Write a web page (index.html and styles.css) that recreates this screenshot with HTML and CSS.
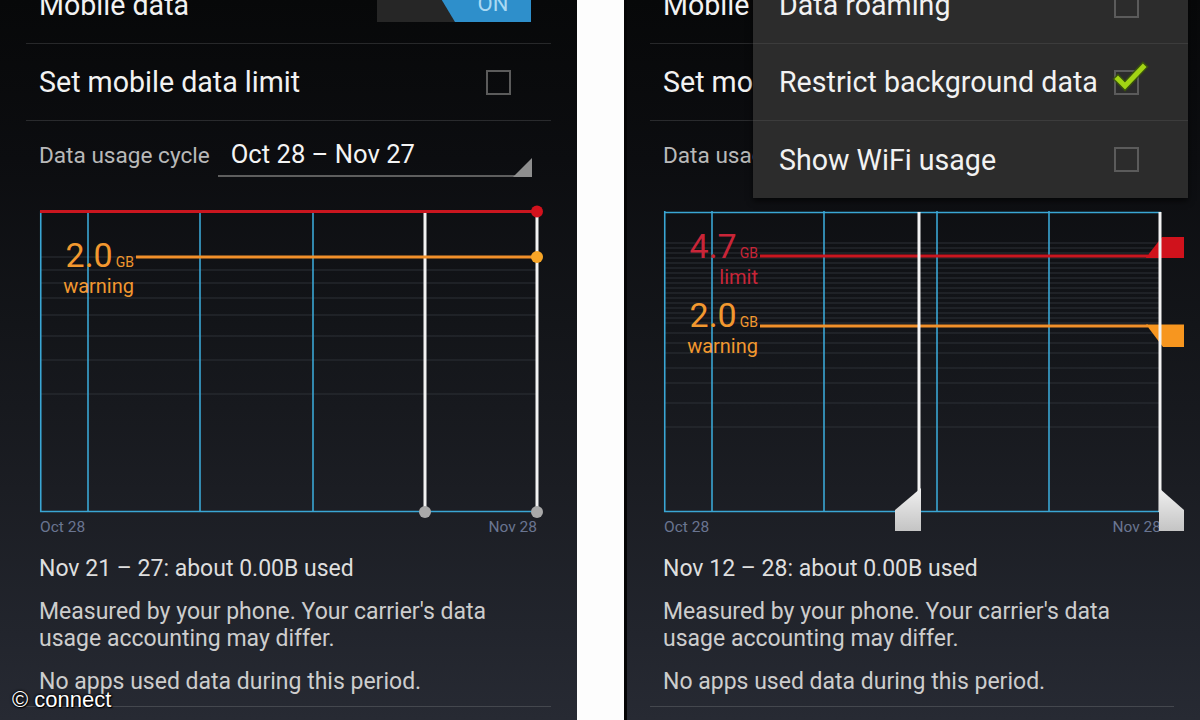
FILE: index.html
```html
<!DOCTYPE html>
<html>
<head>
<meta charset="utf-8">
<title>Data usage</title>
<link rel="stylesheet" href="styles.css">
</head>
<body>
<div class="stage">
  <section class="phone phone-left">
    <div class="row row-first">
      <span class="title">Mobile data</span>
      <div class="toggle"><div class="toggle-on">ON</div></div>
    </div>
    <div class="row">
      <span class="title">Set mobile data limit</span>
      <span class="checkbox"></span>
    </div>
    <div class="cycle">
      <span class="cycle-label">Data usage cycle</span>
      <div class="spinner"><span>Oct 28 – Nov 27</span></div>
    </div>
    <div class="chart">
      <svg class="chart-canvas" width="497" height="301" viewBox="0 0 497 301">
        <g class="grid">
          <line x1="0" x2="497" y1="46" y2="46"/>
          <line x1="0" x2="497" y1="59" y2="59"/>
          <line x1="0" x2="497" y1="72" y2="72"/>
          <line x1="0" x2="497" y1="87" y2="87"/>
          <line x1="0" x2="497" y1="104" y2="104"/>
          <line x1="0" x2="497" y1="125" y2="125"/>
          <line x1="0" x2="497" y1="149" y2="149"/>
          <line x1="0" x2="497" y1="183" y2="183"/>
        </g>
        <g class="cyan">
          <line x1="0.75" x2="0.75" y1="0" y2="301"/>
          <line x1="48" x2="48" y1="0" y2="301"/>
          <line x1="160" x2="160" y1="0" y2="301"/>
          <line x1="273" x2="273" y1="0" y2="301"/>
          <line x1="0" x2="497" y1="300.5" y2="300.5"/>
        </g>
        <g class="white">
          <line x1="385" x2="385" y1="0" y2="301"/>
          <line x1="497" x2="497" y1="0" y2="301"/>
        </g>
        <line class="red-line" x1="0" x2="497" y1="0.5" y2="0.5"/>
        <line class="orange-line" x1="96" x2="497" y1="46" y2="46"/>
        <circle class="red-dot" cx="497" cy="0.5" r="6"/>
        <circle class="orange-dot" cx="497" cy="46" r="6"/>
        <circle class="gray-dot" cx="385" cy="301" r="6"/>
        <circle class="gray-dot" cx="497" cy="301" r="6"/>
      </svg>
      <div class="chart-label warn label-left-warn">2.0<small>GB</small><span class="sub">warning</span></div>
    </div>
    <div class="axis"><span>Oct 28</span><span>Nov 28</span></div>
    <p class="summary">Nov 21 – 27: about 0.00B used</p>
    <p class="note note-first">Measured by your phone. Your carrier's data<br>usage accounting may differ.</p>
    <p class="note note-second">No apps used data during this period.</p>
    <div class="bottom-rule"></div>
    <div class="watermark">© connect</div>
  </section>

  <div class="gap"></div>

  <section class="phone phone-right">
    <div class="row row-first">
      <span class="title">Mobile data</span>
      <div class="toggle"><div class="toggle-on">ON</div></div>
    </div>
    <div class="row">
      <span class="title">Set mobile data limit</span>
      <span class="checkbox"></span>
    </div>
    <div class="cycle">
      <span class="cycle-label">Data usage cycle</span>
      <div class="spinner"><span>Oct 28 – Nov 27</span></div>
    </div>
    <div class="chart">
      <svg class="chart-canvas" width="497" height="301" viewBox="0 0 497 301">
        <defs>
          <linearGradient id="handleGrad" x1="0" y1="0" x2="0" y2="1">
            <stop offset="0" stop-color="#f0f0f0"/>
            <stop offset="1" stop-color="#c4c4c4"/>
          </linearGradient>
        </defs>
        <g class="grid">
          <line x1="0" x2="497" y1="32" y2="32"/>
          <line x1="0" x2="497" y1="37" y2="37"/>
          <line x1="0" x2="497" y1="42" y2="42"/>
          <line x1="0" x2="497" y1="47" y2="47"/>
          <line x1="0" x2="497" y1="52" y2="52"/>
          <line x1="0" x2="497" y1="57" y2="57"/>
          <line x1="0" x2="497" y1="62" y2="62"/>
          <line x1="0" x2="497" y1="67" y2="67"/>
          <line x1="0" x2="497" y1="72" y2="72"/>
          <line x1="0" x2="497" y1="77" y2="77"/>
          <line x1="0" x2="497" y1="82" y2="82"/>
          <line x1="0" x2="497" y1="87" y2="87"/>
          <line x1="0" x2="497" y1="92" y2="92"/>
          <line x1="0" x2="497" y1="97" y2="97"/>
          <line x1="0" x2="497" y1="102" y2="102"/>
          <line x1="0" x2="497" y1="107" y2="107"/>
          <line x1="0" x2="497" y1="112" y2="112"/>
          <line x1="0" x2="497" y1="122" y2="122"/>
          <line x1="0" x2="497" y1="132" y2="132"/>
          <line x1="0" x2="497" y1="142" y2="142"/>
          <line x1="0" x2="497" y1="157" y2="157"/>
          <line x1="0" x2="497" y1="172" y2="172"/>
          <line x1="0" x2="497" y1="192" y2="192"/>
          <line x1="0" x2="497" y1="216" y2="216"/>
        </g>
        <g class="cyan">
          <line x1="0" x2="497" y1="1.5" y2="1.5"/>
          <line x1="0.75" x2="0.75" y1="0" y2="301"/>
          <line x1="48" x2="48" y1="0" y2="301"/>
          <line x1="160" x2="160" y1="0" y2="301"/>
          <line x1="273" x2="273" y1="0" y2="301"/>
          <line x1="385" x2="385" y1="0" y2="301"/>
          <line x1="0" x2="497" y1="300.5" y2="300.5"/>
        </g>
        <line class="red-line" x1="96" x2="484" y1="45" y2="45"/>
        <polygon class="red-handle" points="482,46.5 498,26 520,26 520,47 482,47"/>
        <line class="orange-line" x1="96" x2="484" y1="115" y2="115"/>
        <polygon class="orange-handle" points="482,113.5 520,113.5 520,136 499,136"/>
        <g class="white">
          <line x1="255" x2="255" y1="1" y2="301"/>
          <line x1="496" x2="496" y1="1" y2="301"/>
        </g>
        <polygon class="white-handle" points="257,277 257,320 231,320 231,299"/>
        <polygon class="white-handle" points="495,277 520,299 520,320 495,320"/>
      </svg>
      <div class="chart-label limit label-right-limit">4.7<small>GB</small><span class="sub">limit</span></div>
      <div class="chart-label warn label-right-warn">2.0<small>GB</small><span class="sub">warning</span></div>
    </div>
    <div class="axis"><span>Oct 28</span><span>Nov 28</span></div>
    <p class="summary">Nov 12 – 28: about 0.00B used</p>
    <p class="note note-first">Measured by your phone. Your carrier's data<br>usage accounting may differ.</p>
    <p class="note note-second">No apps used data during this period.</p>
    <div class="bottom-rule"></div>

    <div class="menu">
      <div class="menu-item">
        <span class="title">Data roaming</span>
        <span class="checkbox"></span>
      </div>
      <div class="menu-item">
        <span class="title">Restrict background data</span>
        <span class="checkbox checked">
          <svg class="check" width="36" height="32" viewBox="0 0 36 32">
            <path class="check-glow" d="M4 17 L11 24 L29 5"/>
            <path class="check-mark" d="M4 17 L11 24 L29 5"/>
          </svg>
        </span>
      </div>
      <div class="menu-item">
        <span class="title">Show WiFi usage</span>
        <span class="checkbox"></span>
      </div>
    </div>
  </section>
</div>
</body>
</html>
```

FILE: styles.css
```css
* {
  box-sizing: border-box;
}

html, body {
  margin: 0;
  padding: 0;
  background: #ffffff;
}

body {
  font-family: "Roboto", "Liberation Sans", sans-serif;
  color: #f0f0f0;
}

.stage {
  display: flex;
  width: 1200px;
  height: 720px;
  overflow: hidden;
  background: #fdfdfd;
}

.gap {
  width: 47px;
  flex-shrink: 0;
  background: #fdfdfd;
}

.phone {
  position: relative;
  flex-shrink: 0;
  height: 720px;
  overflow: hidden;
  display: flex;
  flex-direction: column;
  padding: 0 26px;
  background: linear-gradient(180deg, #070809 0%, #0c0d10 22%, #131519 45%, #1b1d23 68%, #22252d 88%, #272a33 100%);
}

.phone-left {
  width: 577px;
}

.phone-right {
  width: 576px;
  box-shadow: inset 3px 0 0 #050506;
}

/* ---------- preference rows ---------- */

.row {
  height: 77px;
  flex-shrink: 0;
  display: flex;
  align-items: center;
  justify-content: space-between;
  padding: 0 40px 0 13px;
  border-bottom: 1px solid rgba(255, 255, 255, 0.13);
}

.row-first {
  margin-top: -33px;
}

.title {
  font-size: 28.6px;
  color: #f2f2f2;
  white-space: nowrap;
}

.checkbox {
  position: relative;
  width: 25px;
  height: 25px;
  flex-shrink: 0;
  border: 2px solid #5b5b5b;
}

.toggle {
  align-self: flex-start;
  margin-top: 5px;
  margin-right: -20px;
  position: relative;
  width: 154px;
  height: 50px;
  flex-shrink: 0;
  background: #262626;
}

.toggle-on {
  position: absolute;
  top: 0;
  right: 0;
  bottom: 0;
  width: 106px;
  background: #2e8fcb;
  clip-path: polygon(0 0, 100% 0, 100% 100%, 30px 100%);
  display: flex;
  align-items: flex-end;
  justify-content: center;
  padding: 0 0 7px 30px;
  font-size: 22px;
  line-height: 22px;
  color: #a9d9f3;
}

/* ---------- cycle spinner ---------- */

.cycle {
  height: 68px;
  flex-shrink: 0;
  display: flex;
  align-items: center;
  padding-left: 13px;
}

.cycle-label {
  font-size: 22.6px;
  color: #b9b9b9;
  white-space: nowrap;
}

.spinner {
  position: relative;
  margin-left: 8px;
  width: 314px;
  height: 44px;
  display: flex;
  align-items: center;
  padding-left: 13px;
  border-bottom: 2px solid #5e5e5e;
  font-size: 25.6px;
  color: #f4f4f4;
  white-space: nowrap;
}

.spinner::after {
  content: "";
  position: absolute;
  right: 0;
  bottom: -2px;
  width: 0;
  height: 0;
  border-left: 19px solid transparent;
  border-bottom: 19px solid #8e8e8e;
}

/* ---------- chart ---------- */

.chart {
  position: relative;
  flex-shrink: 0;
  margin: 22px 0 0 14px;
  width: 497px;
  height: 301px;
}

.chart-canvas {
  position: absolute;
  left: 0;
  top: 0;
  overflow: visible;
}

.grid line {
  stroke: #2d3037;
  stroke-width: 1;
}

.cyan line {
  stroke: #3aa6d4;
  stroke-width: 1.6;
}

.white line {
  stroke: #f2f2f2;
  stroke-width: 3;
}

.red-line {
  stroke: #c9161f;
  stroke-width: 3;
}

.orange-line {
  stroke: #f1902a;
  stroke-width: 3;
}

.red-dot {
  fill: #d3121d;
}

.orange-dot {
  fill: #f8a526;
}

.gray-dot {
  fill: #a9a9a9;
}

.red-handle {
  fill: #d0121c;
}

.orange-handle {
  fill: #f7961f;
}

.white-handle {
  fill: url(#handleGrad);
}

.chart-label {
  position: absolute;
  left: 0;
  width: 94px;
  text-align: right;
  font-size: 34px;
  line-height: 34px;
  white-space: nowrap;
}

.chart-label small {
  font-size: 14px;
  margin-left: 3px;
}

.chart-label .sub {
  display: block;
  margin-top: -5px;
  font-size: 20px;
  line-height: 24px;
}

.chart-label.warn {
  color: #f2982f;
}

.chart-label.limit {
  color: #c92538;
}

.label-left-warn {
  top: 27px;
}

.label-right-limit {
  top: 18px;
}

.label-right-warn {
  top: 87px;
}

.axis {
  flex-shrink: 0;
  margin: 7px 0 0 14px;
  width: 497px;
  display: flex;
  justify-content: space-between;
  font-size: 15.5px;
  line-height: 16px;
  color: #6a7591;
}

/* ---------- summary text ---------- */

.summary,
.note {
  margin: 0;
  padding-left: 13px;
  font-size: 23px;
  line-height: 27px;
  white-space: nowrap;
  flex-shrink: 0;
}

.summary {
  margin-top: 20px;
  color: #dedede;
}

.note {
  color: #cdcdcd;
}

.note-first {
  margin-top: 16px;
}

.note-second {
  margin-top: 16px;
}

.bottom-rule {
  flex-shrink: 0;
  margin-top: 11px;
  height: 1px;
  background: rgba(255, 255, 255, 0.14);
}

.watermark {
  position: absolute;
  left: 12px;
  top: 689px;
  font-family: "Liberation Sans", Arial, sans-serif;
  font-size: 22px;
  line-height: 22px;
  color: #ffffff;
  text-shadow: 0 0 2px #000, 0 0 3px #000, 1px 1px 1px #000;
}

/* ---------- overflow menu ---------- */

.menu {
  position: absolute;
  top: -33px;
  left: 129px;
  width: 435px;
  background: #2c2c2c;
  box-shadow: 0 3px 6px rgba(0, 0, 0, 0.65);
}

.menu-item {
  height: 77px;
  display: flex;
  align-items: center;
  justify-content: space-between;
  padding: 0 49px 0 26px;
  border-bottom: 1px solid #3c3c3c;
}

.menu-item:last-child {
  border-bottom: none;
}

.check {
  position: absolute;
  left: -2px;
  top: -10px;
  overflow: visible;
}

.check-glow {
  fill: none;
  stroke: #3c5a06;
  stroke-width: 8;
  stroke-linecap: square;
  stroke-linejoin: miter;
  opacity: 0.8;
}

.check-mark {
  fill: none;
  stroke: #a2d414;
  stroke-width: 5;
  stroke-linecap: square;
  stroke-linejoin: miter;
}
```
